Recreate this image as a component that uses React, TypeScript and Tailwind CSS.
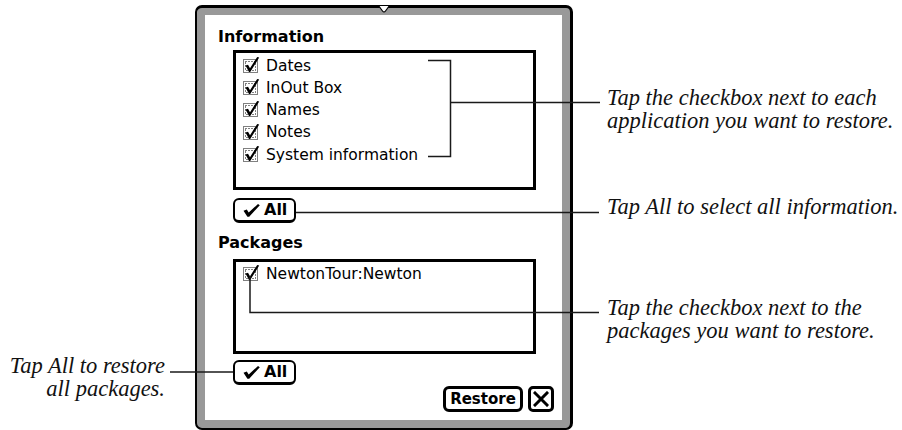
import React from "react";

const sans = { fontFamily: '"DejaVu Sans", "Liberation Sans", sans-serif' };
const serif = { fontFamily: '"Liberation Serif", "Times New Roman", serif' };

function CheckBox() {
  return (
    <svg width="22" height="18" viewBox="0 0 22 18" className="shrink-0">
      <rect x="0.5" y="2.5" width="14" height="13" fill="none" stroke="#000" strokeWidth="1" strokeDasharray="1 1" />
      <rect x="2.5" y="4.5" width="10" height="9" fill="none" stroke="#000" strokeWidth="1" strokeDasharray="1 2" />
      <path d="M2.5 8.5 L5 7.8 L7 11.2 L14.2 0 L16.2 0.6 L7.2 15 L6 15 Z" fill="#000" />
    </svg>
  );
}

function Row({ label }: { label: string }) {
  return (
    <div className="flex items-center h-[22.3px]">
      <CheckBox />
      <span className="ml-[1px] text-[15.5px] leading-[22.3px] text-black whitespace-nowrap">{label}</span>
    </div>
  );
}

function AllButton({ className }: { className: string }) {
  return (
    <div className={"ml-[28px] w-[63px] h-[25px] rounded-[6px] border-2 border-b-[3px] border-black flex items-center pl-[8px] gap-[4px] " + className}>
      <svg width="17" height="13" viewBox="0 0 17 13" className="shrink-0">
        <path d="M0.5 6.8 L3.8 5.4 L5.7 8.6 L15 0 L16.8 1.2 L6.2 12.8 L4.4 12.8 Z" fill="#000" />
      </svg>
      <span className="font-bold text-[16px] leading-none text-black">All</span>
    </div>
  );
}

export default function App() {
  return (
    <div className="relative w-[902px] h-[430px] bg-white overflow-hidden flex" style={sans}>
      {/* left callout */}
      <div
        className="w-[195px] shrink-0 pt-[354px] pr-[30px] text-right italic text-[22.5px] leading-[23px] text-[#111]"
        style={serif}
      >
        Tap All to restore
        <br />
        all packages.
      </div>

      {/* panel */}
      <div className="mt-[5px] w-[378px] h-[425px] shrink-0 rounded-[7px] border-2 border-t-[3px] border-r-[3px] border-black p-[8px] pt-[7px] bg-[#999999]">
        <div className="h-full bg-white flex flex-col">
          <div className="mt-[13.5px] ml-[13px] h-[16px] leading-[16px] text-[16px] font-bold text-black">Information</div>
          <div className="mt-[5.5px] ml-[28px] w-[303px] h-[140px] shrink-0 border-[3px] border-black pt-[1.5px] pl-[7px]">
            <Row label="Dates" />
            <Row label="InOut Box" />
            <Row label="Names" />
            <Row label="Notes" />
            <Row label="System information" />
          </div>
          <AllButton className="mt-[8px]" />
          <div className="mt-[12px] ml-[13px] h-[16px] leading-[16px] text-[16px] font-bold text-black">Packages</div>
          <div className="mt-[8px] ml-[28px] w-[303px] h-[95px] shrink-0 border-[3px] border-black pt-[0.5px] pl-[7px]">
            <Row label="NewtonTour:Newton" />
          </div>
          <AllButton className="mt-[6px]" />
          <div className="mt-[1px] flex justify-end gap-[5px] pr-[8px]">
            <div className="w-[80px] h-[26px] rounded-[6px] border-[3px] border-black flex items-center justify-center">
              <span className="font-bold text-[15px] leading-none text-black">Restore</span>
            </div>
            <div className="w-[26px] h-[26px] rounded-[5px] border-[3px] border-black flex items-center justify-center">
              <svg width="16" height="16" viewBox="0 0 16 16">
                <path d="M2 2 L14 14 M14 2 L2 14" stroke="#000" strokeWidth="3" strokeLinecap="square" />
              </svg>
            </div>
          </div>
        </div>
      </div>

      {/* right callouts */}
      <div className="flex-1 pl-[34px] italic text-[22.5px] leading-[23px] text-[#111] whitespace-nowrap" style={serif}>
        <div className="mt-[86px]">
          Tap the checkbox next to each
          <br />
          application you want to restore.
        </div>
        <div className="mt-[63px]">Tap All to select all information.</div>
        <div className="mt-[78px]">
          Tap the checkbox next to the
          <br />
          packages you want to restore.
        </div>
      </div>

      {/* leader lines and notch */}
      <svg className="absolute inset-0 pointer-events-none" width="902" height="430" viewBox="0 0 902 430">
        <g stroke="#1a1a1a" strokeWidth="1.5" fill="none">
          <path d="M428 60.5 H450.5 V156.5 H428" />
          <path d="M450.5 102.5 H600" />
          <path d="M296 212.5 H599" />
          <path d="M250 276 V312.5 H599" />
          <path d="M170 372 H233" />
        </g>
        <path d="M378.5 5.5 L389.5 5.5 L385.5 11 Q384 13 382.5 11 Z" fill="#fff" stroke="#000" strokeWidth="1.2" />
      </svg>
    </div>
  );
}
